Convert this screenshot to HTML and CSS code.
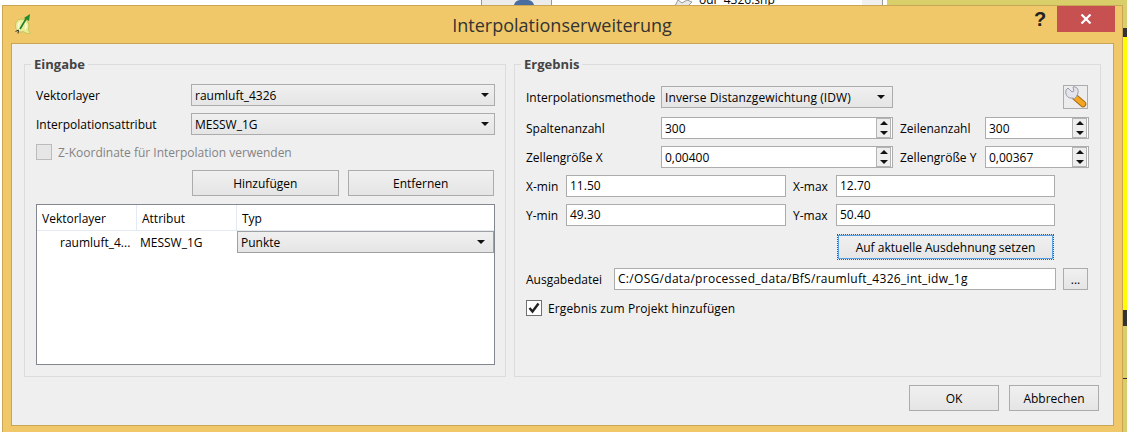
FILE: index.html
```html
<!DOCTYPE html>
<html>
<head>
    <title>Interpolationserweiterung</title>
    <link rel="stylesheet" href="styles.css">
</head>
<body>
    <!-- what shows behind the dialog -->
    <div class="desk">
        <div class="desk-files">
            <div class="desk-tab"><span class="desk-blob"></span></div>
            <div class="desk-list">
                <svg class="desk-file" width="20" height="6" viewBox="0 0 20 6"><path d="M1 6 L4 0 L8 3 L13 0 L18 2 L14 6 Z" fill="#e8e8e8" stroke="#999" stroke-width="1"/></svg>
                <span class="desk-name">odr_4326.shp</span>
            </div>
            <div class="desk-scroll"></div>
        </div>
        <div class="desk-map">
            <div class="map-top"></div>
            <div class="map-dark"></div>
            <div class="map-yellow"></div>
            <div class="map-dark map-dark-low"></div>
            <div class="map-olive"></div>
            <div class="map-line"></div>
            <div class="map-olive"></div>
        </div>
    </div>

    <div class="window">
        <div class="titlebar">
            <svg class="app-icon" width="18" height="22" viewBox="0 0 18 22">
                <path d="M8 6 C3 6 1 10 1.500 14 C2 18 6 20 9.500 18.500 C11.500 20.500 14 21 16.500 20 L14 17 C16 13 15 6 8 6 Z" fill="#eaec96" stroke="#c2c65a" stroke-width="1"/>
                <path d="M6 9 C4 11 4 15 6 17 M11 10 C12.500 12 12.500 14 11 16" fill="none" stroke="#fbfbd8" stroke-width="1.500"/>
                <path d="M6 16 L12 6" stroke="#1f7a2c" stroke-width="1.600"/>
                <path d="M10 5 L16 1 L15 8 Z" fill="#1f8a30"/>
                <path d="M1.500 18.500 L4.500 17 L4 20.500" fill="none" stroke="#333" stroke-width="1"/>
            </svg>
            <div class="title">Interpolationserweiterung</div>
            <div class="help">?</div>
            <div class="close">
                <svg width="12" height="10" viewBox="0 0 12 10"><path d="M1.500 0.500 L10.500 9.500 M10.500 0.500 L1.500 9.500" stroke="#fff" stroke-width="2.200"/></svg>
            </div>
        </div>

        <div class="client">
            <div class="groups">
                <fieldset class="group group-in">
                    <legend>Eingabe</legend>
                    <div class="in-form">
                        <label>Vektorlayer</label>
                        <div class="combo"><span>raumluft_4326</span><i class="arrow"></i></div>
                        <label>Interpolationsattribut</label>
                        <div class="combo"><span>MESSW_1G</span><i class="arrow"></i></div>
                    </div>
                    <div class="check check-off">
                        <span class="box"></span>
                        <span>Z-Koordinate für Interpolation verwenden</span>
                    </div>
                    <div class="in-buttons">
                        <div class="btn">Hinzufügen</div>
                        <div class="btn">Entfernen</div>
                    </div>
                    <div class="table">
                        <div class="thead">
                            <div class="th th-layer">Vektorlayer</div>
                            <div class="th th-attr">Attribut</div>
                            <div class="th th-type">Typ</div>
                        </div>
                        <div class="trow">
                            <div class="td-layer">raumluft_4...</div>
                            <div class="td-attr">MESSW_1G</div>
                            <div class="combo combo-cell"><span>Punkte</span><i class="arrow"></i></div>
                        </div>
                    </div>
                </fieldset>

                <fieldset class="group group-out">
                    <legend>Ergebnis</legend>
                    <div class="method-row">
                        <label>Interpolationsmethode</label>
                        <div class="combo combo-method"><span>Inverse Distanzgewichtung (IDW)</span><i class="arrow"></i></div>
                        <div class="tool">
                            <svg width="22" height="22" viewBox="0 0 22 22">
                                <path d="M10 11 L18 18" stroke="#a86a10" stroke-width="6.500" stroke-linecap="round"/>
                                <path d="M10 11 L18 18" stroke="#f5a623" stroke-width="4.500" stroke-linecap="round"/>
                                <path d="M3 2 L7 6 L9 5 L8 1 C11 0 14 3 13 7 L11.500 10.500 L9.500 12.500 L6 12 C2 12 0 8 1 4 Z" fill="#e4e4ec" stroke="#9a9aa8" stroke-width="1"/>
                            </svg>
                        </div>
                    </div>
                    <div class="size-form">
                        <label>Spaltenanzahl</label>
                        <div class="spin"><span>300</span><div class="spin-btns"><i class="up"></i><i class="down"></i></div></div>
                        <label class="size-label">Zeilenanzahl</label>
                        <div class="spin"><span>300</span><div class="spin-btns"><i class="up"></i><i class="down"></i></div></div>
                        <label>Zellengröße X</label>
                        <div class="spin"><span>0,00400</span><div class="spin-btns"><i class="up"></i><i class="down"></i></div></div>
                        <label class="size-label">Zellengröße Y</label>
                        <div class="spin"><span>0,00367</span><div class="spin-btns"><i class="up"></i><i class="down"></i></div></div>
                    </div>
                    <div class="extent-form">
                        <label>X-min</label>
                        <div class="field">11.50</div>
                        <label>X-max</label>
                        <div class="field">12.70</div>
                        <label>Y-min</label>
                        <div class="field">49.30</div>
                        <label>Y-max</label>
                        <div class="field">50.40</div>
                    </div>
                    <div class="btn btn-extent">Auf aktuelle Ausdehnung setzen</div>
                    <div class="file-row">
                        <label>Ausgabedatei</label>
                        <div class="field field-file">C:/OSG/data/processed_data/BfS/raumluft_4326_int_idw_1g</div>
                        <div class="btn btn-dots">...</div>
                    </div>
                    <div class="check">
                        <span class="box box-on">
                            <svg width="14" height="14" viewBox="0 0 14 14"><path d="M2.500 7 L5.500 10.500 L11.500 2.500" fill="none" stroke="#222" stroke-width="2.400"/></svg>
                        </span>
                        <span class="check-wide">Ergebnis zum Projekt hinzufügen</span>
                    </div>
                </fieldset>
            </div>
            <div class="dialog-buttons">
                <div class="btn btn-dialog">OK</div>
                <div class="btn btn-dialog">Abbrechen</div>
            </div>
        </div>
    </div>
</body>
</html>
```

FILE: styles.css
```css
html, body {
    margin: 0;
    padding: 0;
    height: 100%;
    overflow: hidden;
}

body {
    background-color: #fff;
    font-family: "Open Sans", "Noto Sans", sans-serif;
    font-size: 12px;
    color: #000;
}

* {
    box-sizing: border-box;
}

/* behind the dialog */
.desk {
    display: flex;
    height: 432px;
}

.desk-files {
    display: flex;
    flex: 0 0 887px;
    height: 5px;
    background-color: #fff;
    overflow: hidden;
}

.desk-tab {
    width: 71px;
    margin-left: 481px;
    background-color: #ececec;
    border-left: 1px solid #999;
    border-right: 1px solid #999;
    padding-left: 32px;
}

.desk-blob {
    display: block;
    width: 20px;
    height: 12px;
    background-color: #4a6da0;
    border-radius: 6px;
}

.desk-list {
    display: flex;
    align-items: flex-start;
    margin-left: 122px;
}

.desk-name {
    margin-top: -8px;
    margin-left: 5px;
    font-size: 12px;
    line-height: 16px;
}

.desk-scroll {
    width: 21px;
    margin-left: auto;
    margin-right: 4px;
    background-color: #f0f0f0;
    border-right: 1px solid #999;
}

.desk-map {
    flex: 1;
    display: flex;
    flex-direction: column;
    background-color: #d8cf6a;
}

.map-top {
    height: 28px;
}

.map-dark {
    height: 9px;
    background-color: #333;
}

.map-dark-low {
    height: 16px;
}

.map-yellow {
    height: 273px;
    background-color: #ffff00;
}

.map-olive {
    height: 52px;
}

.map-line {
    height: 1px;
    background-color: #333;
}

/* dialog */
.window {
    position: absolute;
    left: 2px;
    top: 5px;
    width: 1121px;
    height: 427px;
    background-color: #f0c869;
    border: 1px solid #c8a656;
    border-bottom: none;
    padding: 0 8px 6px 8px;
    display: flex;
    flex-direction: column;
}

.titlebar {
    height: 37px;
    display: flex;
    align-items: flex-start;
    flex: none;
    margin-right: -8px;
}

.app-icon {
    margin-top: 7px;
    margin-left: 3px;
    flex: none;
}

.title {
    flex: 1;
    text-align: center;
    font-size: 18px;
    line-height: 24px;
    margin-top: 7px;
    margin-left: 64px;
    color: #333;
}

.help {
    width: 24px;
    text-align: center;
    font-family: "Liberation Sans", sans-serif;
    font-size: 20px;
    font-weight: bold;
    line-height: 26px;
    color: #222;
    margin-right: 5px;
}

.close {
    width: 58px;
    height: 26px;
    margin-right: 7px;
    background-color: #c75050;
    display: flex;
    align-items: center;
    justify-content: center;
}

.client {
    flex: 1;
    background-color: #efefef;
    border: 1px solid #c8a656;
    padding: 0 12px 13px 12px;
    display: flex;
    flex-direction: column;
}

.groups {
    display: flex;
    gap: 8px;
    margin-top: 12px;
    flex: none;
}

.group {
    flex: none;
    margin: 0;
    padding: 0 11px;
    min-width: 0;
    border: 1px solid #dcdcdc;
    height: 321px;
}

.group legend {
    padding: 0 3px;
    margin-left: -5px;
    font-size: 13px;
    font-weight: bold;
    color: #444;
    line-height: 16px;
}

.group-in {
    width: 482px;
}

.group-out {
    width: 587px;
}

label {
    display: block;
    white-space: nowrap;
}

.in-form {
    display: grid;
    grid-template-columns: 155px 304px;
    grid-auto-rows: 22px;
    row-gap: 7px;
    align-items: center;
    margin-top: 12px;
}

.combo {
    height: 22px;
    border: 1px solid #acacac;
    background: linear-gradient(#f0f0f0, #e5e5e5);
    display: flex;
    align-items: center;
    justify-content: space-between;
    padding: 0 5px 0 3px;
    white-space: nowrap;
}

.arrow {
    width: 0;
    height: 0;
    border-left: 4px solid transparent;
    border-right: 4px solid transparent;
    border-top: 4px solid #111;
}

.check {
    display: flex;
    align-items: center;
    gap: 6px;
    height: 16px;
}

.group-in .check {
    margin-top: 9px;
}

.check-off {
    color: #838383;
}

.check-wide {
    letter-spacing: 0.1px;
}

.box {
    width: 16px;
    height: 16px;
    border: 1px solid #bbb;
    background-color: #e6e6e6;
    flex: none;
}

.box-on {
    border-color: #707070;
    background-color: #fff;
    display: flex;
    align-items: center;
    justify-content: center;
}

.in-buttons {
    display: flex;
    gap: 9px;
    margin-top: 10px;
    margin-left: 156px;
}

.btn {
    height: 26px;
    width: 147px;
    border: 1px solid #acacac;
    background: linear-gradient(#f0f0f0, #e5e5e5);
    display: flex;
    align-items: center;
    justify-content: center;
    white-space: nowrap;
}

.table {
    width: 459px;
    height: 161px;
    margin-top: 8px;
    border: 1px solid #828790;
    background-color: #fff;
}

.thead {
    display: flex;
    height: 26px;
    border-bottom: 1px solid #e3eaf5;
}

.th {
    padding: 2px 5px 0;
    line-height: 24px;
    border-right: 1px solid #e3eaf5;
}

.th-layer {
    width: 100px;
}

.th-attr {
    width: 100px;
}

.th-type {
    flex: 1;
    border-right: none;
}

.trow {
    display: flex;
    align-items: center;
    height: 22px;
}

.td-layer {
    width: 103px;
    padding-left: 23px;
    white-space: nowrap;
}

.td-attr {
    width: 97px;
}

.combo-cell {
    width: 257px;
    padding-right: 8px;
    border-color: #a0a0a0;
}

.method-row {
    display: flex;
    align-items: center;
    margin-top: 13px;
    height: 24px;
}

.method-row label {
    width: 135px;
}

.combo-method {
    width: 232px;
    padding-right: 7px;
    letter-spacing: 0.1px;
}

.tool {
    width: 25px;
    height: 24px;
    margin-left: 170px;
    border: 1px solid #acacac;
    background-color: #ececec;
    display: flex;
    align-items: center;
    justify-content: center;
}

.size-form {
    display: grid;
    grid-template-columns: 135px 232px 92px 104px;
    grid-auto-rows: 22px;
    row-gap: 7px;
    align-items: center;
    margin-top: 8px;
}

.size-label {
    padding-left: 7px;
}

.spin {
    height: 22px;
    border: 1px solid #acacac;
    background-color: #fff;
    display: flex;
    align-items: center;
    justify-content: space-between;
    padding-left: 3px;
}

.spin-btns {
    width: 15px;
    height: 20px;
    display: flex;
    flex-direction: column;
    gap: 1px;
    margin-right: 1px;
    border: 1px solid #b4b4b4;
    background-color: #eee;
}

.spin-btns i {
    flex: 1;
    display: flex;
    align-items: center;
    justify-content: center;
}

.spin-btns .up::before {
    content: "";
    border-left: 4px solid transparent;
    border-right: 4px solid transparent;
    border-bottom: 4px solid #111;
}

.spin-btns .down::before {
    content: "";
    border-left: 4px solid transparent;
    border-right: 4px solid transparent;
    border-top: 4px solid #111;
}

.extent-form {
    display: grid;
    grid-template-columns: 40px 220px 50px 219px;
    grid-auto-rows: 22px;
    row-gap: 7px;
    align-items: center;
    margin-top: 7px;
}

.extent-form label:nth-child(4n+3) {
    padding-left: 7px;
}

.field {
    height: 22px;
    line-height: 20px;
    border: 1px solid #acacac;
    background-color: #fff;
    padding-left: 3px;
    white-space: nowrap;
}

.btn-extent {
    width: 217px;
    margin-top: 8px;
    margin-left: 311px;
    border: 1px dotted #0a64c8;
    outline: 1px solid #5aa0e6;
    outline-offset: -2px;
}

.file-row {
    display: flex;
    align-items: center;
    margin-top: 8px;
    height: 22px;
}

.file-row label {
    width: 88px;
}

.field-file {
    width: 442px;
    letter-spacing: 0.3px;
}

.btn-dots {
    width: 25px;
    height: 22px;
    margin-left: 7px;
}

.group-out .check {
    margin-top: 10px;
}

.dialog-buttons {
    display: flex;
    justify-content: flex-end;
    gap: 10px;
    margin-top: 8px;
    margin-right: 2px;
}

.btn-dialog {
    width: 90px;
}
```
